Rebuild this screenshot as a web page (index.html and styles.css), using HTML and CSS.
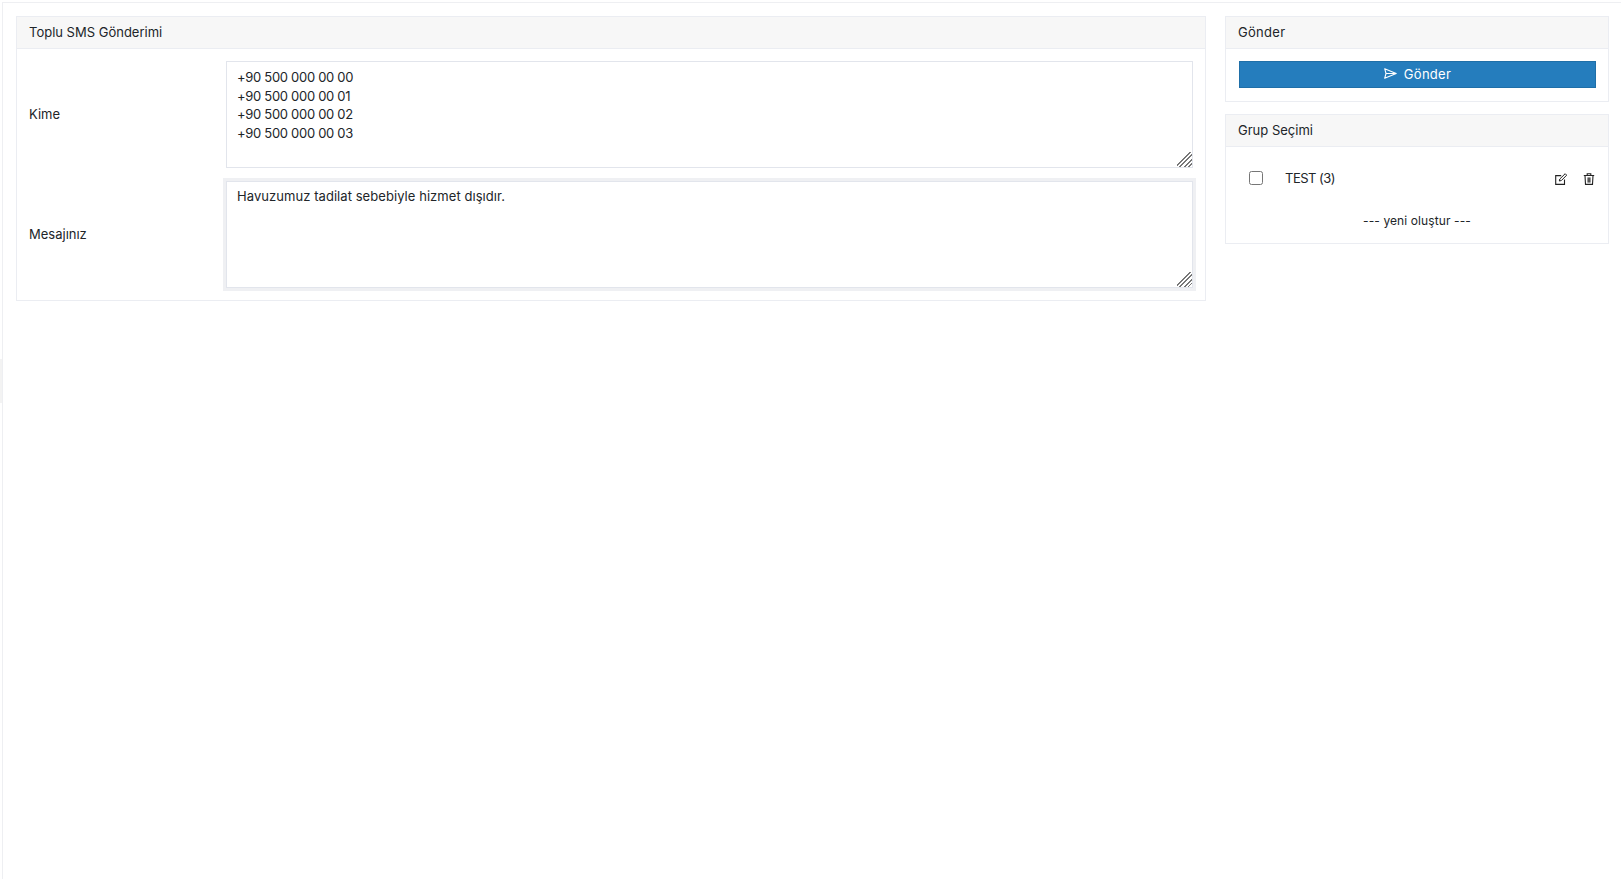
FILE: index.html
```html
<!DOCTYPE html>
<html lang="tr">
<head>
<meta charset="utf-8">
<title>Toplu SMS Gönderimi</title>
<link rel="stylesheet" href="styles.css">
</head>
<body>
<div class="side-tab"></div>
<main class="shell">
  <section class="panel">
    <h2 class="panel-head">Toplu SMS Gönderimi</h2>
    <div class="panel-body form-body">
      <div class="form-row">
        <label class="form-label" for="kime">Kime</label>
        <textarea class="field field-phones" id="kime">+90 500 000 00 00
+90 500 000 00 01
+90 500 000 00 02
+90 500 000 00 03</textarea>
      </div>
      <div class="form-row">
        <label class="form-label" for="mesaj">Mesajınız</label>
        <textarea class="field field-focus" id="mesaj">Havuzumuz tadilat sebebiyle hizmet dışıdır.</textarea>
      </div>
    </div>
  </section>
  <aside class="sidebar">
    <section class="panel">
      <h2 class="panel-head head-wide">Gönder</h2>
      <div class="panel-body send-body">
        <button class="send-btn" type="button">
          <svg class="send-icon" viewBox="0 0 13 11" width="13" height="11"><path d="M.7.7 12.2 5.5.7 10.3 2 5.5Z M2 5.5H12.2" fill="none" stroke="#fff" stroke-width="1.1" stroke-linejoin="round"/></svg>
          Gönder
        </button>
      </div>
    </section>
    <section class="panel">
      <h2 class="panel-head">Grup Seçimi</h2>
      <div class="panel-body group-body">
        <div class="group-row">
          <input class="group-check" type="checkbox">
          <span class="group-name">TEST (3)</span>
          <span class="group-actions">
            <svg viewBox="0 0 12 12" width="12" height="12"><path d="M9.5 6.5V11.4H.7V2.6H6.2" fill="none" stroke="#222" stroke-width="1.1"/><path d="M4.3 8 4.8 6 10.2.7 11.7 2.2 6.4 7.5Z" fill="none" stroke="#222" stroke-width="1"/></svg>
            <svg viewBox="0 0 12 12" width="12" height="12"><path d="M.8 2.5H11.2M4.2 2.3V.7H7.8V2.3" fill="none" stroke="#222" stroke-width="1.1"/><path d="M2 2.5 2.5 11.4H9.5L10 2.5" fill="none" stroke="#222" stroke-width="1.1"/><path d="M4.4 4.4H7.6V9.6H4.4Z" fill="#555"/></svg>
          </span>
        </div>
        <div class="group-new">--- yeni oluştur ---</div>
      </div>
    </section>
  </aside>
</main>
</body>
</html>
```

FILE: styles.css
```css
* { box-sizing: border-box; }
html, body { margin: 0; height: 100%; background: #fff; }
body {
  padding: 2px 0 0 2px;
  font-family: Inter, "Noto Sans", sans-serif;
  font-size: 13px;
  line-height: 18.57px;
  color: #212529;
  overflow: hidden;
}
.side-tab {
  position: absolute;
  left: 0;
  top: 359px;
  width: 2px;
  height: 44px;
  background: #f3f3f3;
}
.shell {
  height: 100%;
  border-left: 1px solid #eeeff2;
  border-top: 1px solid #eeeff2;
  padding: 13px 12px 0 13px;
  display: grid;
  grid-template-columns: 1190px 384px;
  column-gap: 19px;
  align-items: start;
}
.panel {
  border: 1px solid #ebedf2;
  background: #fff;
}
.panel-head {
  margin: 0;
  height: 32px;
  padding: 0 12px;
  display: flex;
  align-items: center;
  background: #f7f7f7;
  border-bottom: 1px solid #ebedf2;
  font-size: 13px;
  font-weight: 400;
}
.head-wide { letter-spacing: .3px; }
.form-body {
  padding: 12px;
  display: flex;
  flex-direction: column;
  gap: 13px;
}
.form-row {
  display: grid;
  grid-template-columns: 197px 1fr;
  align-items: center;
}
.form-label { display: block; }
.field {
  display: block;
  width: 967px;
  height: 107px;
  padding: 6px 9px 6px 10px;
  border: 1px solid #e2e5ec;
  border-radius: 0;
  outline: none;
  font: inherit;
  letter-spacing: .06px;
  color: inherit;
  background: #fff;
  resize: both;
}
.field::-webkit-resizer {
  background:
    linear-gradient(135deg, #fff 42%, transparent 42%, transparent 90%, #fff 90%),
    repeating-linear-gradient(135deg, #777 0, #777 1.4px, #fff 1.4px, #fff 3px);
}
.field-phones { letter-spacing: -.3px; }
.field-focus {
  padding-top: 5px;
  box-shadow: 0 0 0 3px #eff0f3;
}
.sidebar {
  display: flex;
  flex-direction: column;
  gap: 12px;
}
.send-body { padding: 12px 12px 13px 13px; }
.send-btn {
  width: 100%;
  height: 27px;
  display: flex;
  align-items: center;
  justify-content: center;
  gap: 7px;
  padding: 0;
  border: 1px solid #1f6fa8;
  border-radius: 0;
  background: #257dbd;
  color: #fff;
  font: inherit;
  letter-spacing: .3px;
}
.send-icon { margin-top: -2px; }
.group-body { padding: 0 13px; }
.group-row {
  height: 63px;
  display: flex;
  align-items: center;
  padding: 0 0 0 10px;
}
.group-check {
  margin: -1px 0 0 0;
  width: 14px;
  height: 14px;
}
.group-name {
  margin-left: 22px;
  letter-spacing: -.5px;
}
.group-actions {
  margin-left: auto;
  margin-top: 1px;
  display: flex;
  gap: 16px;
}
.group-new {
  height: 33px;
  padding-top: 2px;
  text-align: center;
  font-size: 12px;
  letter-spacing: .1px;
}
```
